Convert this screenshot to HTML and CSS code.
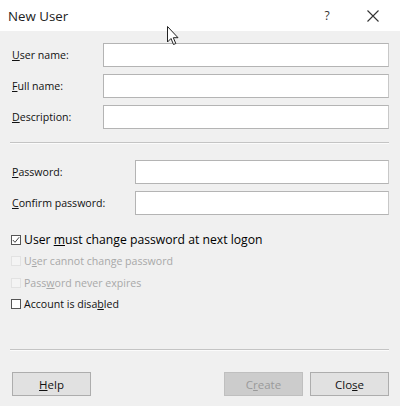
FILE: index.html
```html
<!DOCTYPE html>
<html lang="en">
<head>
  <meta charset="UTF-8">
  <title>New User</title>
  <link rel="stylesheet" href="styles.css">
</head>
<body>
  <div class="dialog">
    <div class="titlebar">
      <span class="title">New User</span>
      <span class="help-btn">?</span>
      <span class="close-btn">
        <svg width="12" height="12" viewBox="0 0 12 12"><path d="M0.5 0.5 L11.5 11.5 M11.5 0.5 L0.5 11.5" stroke="#333" stroke-width="1.1" fill="none"/></svg>
      </span>
    </div>

    <div class="content">
      <div class="fields names">
        <label><u>U</u>ser name:</label>
        <input type="text">
        <label><u>F</u>ull name:</label>
        <input type="text">
        <label><u>D</u>escription:</label>
        <input type="text">
      </div>

      <hr class="sep">

      <div class="fields passwords">
        <label><u>P</u>assword:</label>
        <input type="password">
        <label><u>C</u>onfirm password:</label>
        <input type="password">
      </div>

      <div class="checks">
        <div class="check focus"><span class="box">
          <svg width="8" height="8" viewBox="0 0 8 8"><path d="M0.8 4 L3 6.3 L7.2 1.2" stroke="#444" stroke-width="1" fill="none"/></svg>
        </span><span>User <u>m</u>ust change password at next logon</span></div>
        <div class="check disabled"><span class="box"></span><span>U<u>s</u>er cannot change password</span></div>
        <div class="check disabled"><span class="box"></span><span>Pass<u>w</u>ord never expires</span></div>
        <div class="check"><span class="box"></span><span>Account is disa<u>b</u>led</span></div>
      </div>

      <hr class="sep bottom">

      <div class="buttons">
        <button class="btn"><u>H</u>elp</button>
        <span class="spacer"></span>
        <button class="btn off">C<u>r</u>eate</button>
        <button class="btn">Clo<u>s</u>e</button>
      </div>
    </div>

    <svg class="cursor" width="13" height="20" viewBox="0 0 13 20">
      <path d="M0.5 0.5 L0.5 16 L4 12.5 L6.5 18.5 L8.8 17.5 L6.3 11.7 L11 11.7 Z" fill="#fff" stroke="#222" stroke-width="1"/>
    </svg>
  </div>
</body>
</html>
```

FILE: styles.css
```css
body {
  margin: 0;
  font-family: 'Open Sans', 'Noto Sans', sans-serif;
  font-size: 10.6px;
  color: #000;
  background: #f0f0f0;
}

.dialog {
  position: relative;
  width: 400px;
  height: 406px;
  background: #f0f0f0;
}

.titlebar {
  height: 31px;
  background: #fff;
  display: flex;
  align-items: center;
  padding-left: 8px;
}

.title {
  font-size: 13.3px;
  color: #222;
  flex: 1;
}

.help-btn {
  width: 46px;
  text-align: center;
  font-size: 12px;
  color: #333;
}

.close-btn {
  width: 46px;
  margin-right: 4px;
  display: flex;
  justify-content: center;
}

.content {
  padding: 12px 11px 0 12px;
}

.fields {
  display: grid;
  row-gap: 7px;
  align-items: center;
}

.names {
  grid-template-columns: 91px 1fr;
}

.passwords {
  grid-template-columns: 123px 1fr;
  margin-top: 16px;
}

.fields label {
  color: #111;
}

.fields input {
  height: 24px;
  box-sizing: border-box;
  border: 1px solid #b4b4b4;
  border-right-color: #c8c8c8;
  background: #fff;
  margin: 0;
}

.sep {
  border: none;
  border-top: 1px solid #c4c4c4;
  border-bottom: 1px solid #fbfbfb;
  margin: 13px 0 0 -2px;
}

.sep.bottom {
  margin-top: 34px;
}

.checks {
  margin-top: 14px;
  margin-left: -1px;
}

.check {
  display: flex;
  align-items: center;
  height: 21.5px;
  color: #111;
}

.check.focus {
  font-size: 12.2px;
  color: #000;
}

.check.disabled {
  color: #a8a8a8;
}

.box {
  width: 8px;
  height: 8px;
  border: 1px solid #555;
  background: #fff;
  margin-right: 3px;
  display: flex;
  align-items: center;
  justify-content: center;
}

.check.disabled .box {
  border-color: #e2e2e2;
  background: #f4f4f4;
}

.buttons {
  display: flex;
  gap: 7px;
  margin-top: 21px;
}

.spacer {
  flex: 1;
}

.btn {
  width: 79px;
  height: 24px;
  font-family: inherit;
  font-size: 11.5px;
  background: #e1e1e1;
  border: 1px solid #adadad;
  color: #111;
  padding: 0;
}

.btn.off {
  background: #cccccc;
  border-color: #bfbfbf;
  color: #9a9a9a;
}

.cursor {
  position: absolute;
  left: 167px;
  top: 26px;
}
```
